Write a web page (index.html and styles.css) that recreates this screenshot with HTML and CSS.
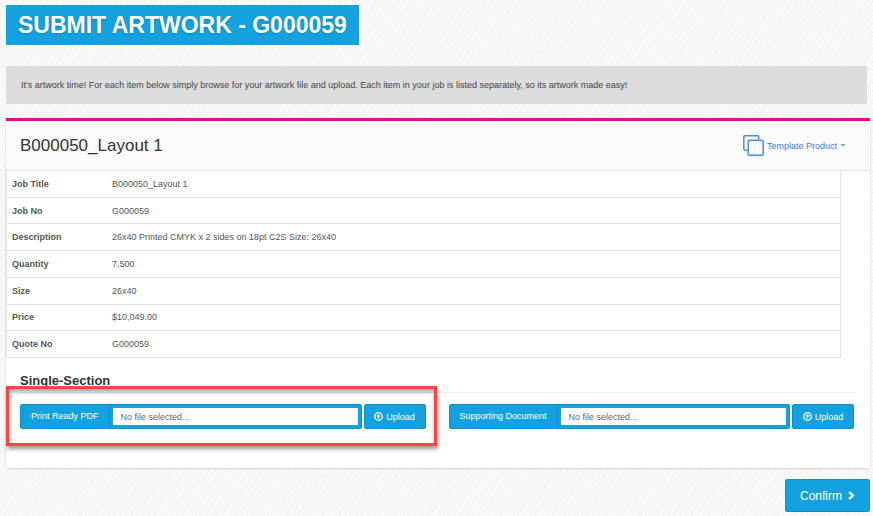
FILE: index.html
```html
<!DOCTYPE html>
<html lang="en">
<head>
  <meta charset="UTF-8" />
  <meta name="viewport" content="width=device-width, initial-scale=1.0"/>
  <title>Submit Artwork</title>
  <link rel="stylesheet" href="styles.css">
</head>
<body>
  <h1 class="page-title">SUBMIT ARTWORK - G000059</h1>
  <p class="intro">It's artwork time! For each item below simply browse for your artwork file and upload. Each item in your job is listed separately, so its artwork made easy!</p>

  <form class="artwork-form">
    <div class="card">
      <div class="card-header">
        <h2>B000050_Layout 1</h2>
        <button type="button" class="template-btn">
          <svg width="21" height="21" viewBox="0 0 21 21" fill="none" stroke="#4a8be0" stroke-width="1.5">
            <path d="M4.5 15.2H2A1.2 1.2 0 0 1 .8 14V2A1.2 1.2 0 0 1 2 .8h12.5A1.2 1.2 0 0 1 15.7 2v2.3"/>
            <rect x="5.2" y="5.2" width="15" height="15" rx="1.2"/>
          </svg>
          Template Product
          <span class="caret"></span>
        </button>
      </div>

      <table class="job-table">
        <tbody>
          <tr><th scope="row">Job Title</th><td>B000050_Layout 1</td></tr>
          <tr><th scope="row">Job No</th><td>G000059</td></tr>
          <tr><th scope="row">Description</th><td>26x40 Printed CMYK x 2 sides on 18pt C2S Size: 26x40</td></tr>
          <tr><th scope="row">Quantity</th><td>7,500</td></tr>
          <tr><th scope="row">Size</th><td>26x40</td></tr>
          <tr><th scope="row">Price</th><td>$10,049.00</td></tr>
          <tr><th scope="row">Quote No</th><td>G000059</td></tr>
        </tbody>
      </table>

      <div class="section">
        <h3>Single-Section</h3>
        <div class="uploads">
          <div class="upload highlighted">
            <div class="file-group">
              <label for="printPdf">Print Ready PDF</label>
              <input type="text" id="printPdf" value="No file selected..." readonly />
            </div>
            <button type="button" class="upload-btn">
              <svg width="9" height="9" viewBox="0 0 10 10" fill="none" stroke="#fff" stroke-width="1.4">
                <circle cx="5" cy="5" r="4.2"/>
                <path d="M5 7.6V3.4M3.3 4.9L5 3.2l1.7 1.7"/>
              </svg>
              Upload
            </button>
          </div>
          <div class="upload">
            <div class="file-group">
              <label for="supportDoc">Supporting Document</label>
              <input type="text" id="supportDoc" value="No file selected..." readonly />
            </div>
            <button type="button" class="upload-btn">
              <svg width="9" height="9" viewBox="0 0 10 10" fill="none" stroke="#fff" stroke-width="1.4">
                <circle cx="5" cy="5" r="4.2"/>
                <path d="M5 7.6V3.4M3.3 4.9L5 3.2l1.7 1.7"/>
              </svg>
              Upload
            </button>
          </div>
        </div>
      </div>
    </div>

    <div class="actions">
      <button type="submit" class="confirm-btn">
        Confirm
        <svg width="7" height="9" viewBox="0 0 7 9" fill="none" stroke="#fff" stroke-width="2.4">
          <path d="M1.2 1l3.6 3.5L1.2 8"/>
        </svg>
      </button>
    </div>
  </form>
</body>
</html>
```

FILE: styles.css
```css
* {
  box-sizing: border-box;
}
body {
  margin: 0;
  padding: 5px 3px 4px 6px;
  font-family: "Liberation Sans", Arial, sans-serif;
  font-size: 9px;
  color: #444;
  background-color: #fafafa;
  background-image:
    repeating-linear-gradient(135deg, rgba(0,0,0,0.015) 0 1px, transparent 1px 3px),
    repeating-linear-gradient(120deg, rgba(0,0,0,0.01) 0 2px, transparent 2px 5px);
}
button, input {
  font-family: inherit;
  font-size: 9px;
}
.page-title {
  width: fit-content;
  margin: 0 0 21px;
  padding: 0 12px;
  font-size: 23px;
  line-height: 40px;
  color: #fff;
  background: #14a2de;
  text-shadow: 0 1px 2px rgba(0,0,0,0.2);
}
.intro {
  margin: 0 3px 14px 0;
  padding: 12px 15px;
  line-height: 14px;
  background: #ddd;
}
.card {
  background: #fff;
  border-top: 3px solid #ec008c;
  box-shadow: 0 1px 2px rgba(0,0,0,0.15);
}
.card-header {
  display: flex;
  justify-content: space-between;
  align-items: center;
  height: 50px;
  padding: 0 24px 0 14px;
  border-bottom: 1px solid #e3e3e3;
  background: #fafafa;
}
.card-header h2 {
  margin: 0;
  font-size: 17px;
  font-weight: normal;
  color: #333;
}
.template-btn {
  display: flex;
  align-items: center;
  gap: 3px;
  padding: 0;
  border: none;
  background: none;
  color: #3f7bd6;
  cursor: pointer;
}
.caret {
  border: 3px solid transparent;
  border-top-color: #aaa;
  border-bottom: none;
}
.job-table {
  width: calc(100% - 29px);
  height: 187px;
  border-spacing: 0;
  border: 1px solid #e3e3e3;
  border-top: none;
  border-bottom: none;
}
.job-table th, .job-table td {
  padding: 0 5px;
  border-bottom: 1px solid #e3e3e3;
  text-align: left;
  color: #555;
}
.job-table th {
  width: 100px;
}
.section {
  padding: 15px 16px 39px 14px;
}
.section h3 {
  margin: 0 -2px 11px 0;
  padding-bottom: 4px;
  border-bottom: 1px solid #eee;
  font-size: 13px;
  line-height: 15px;
  color: #333;
}
.uploads {
  display: grid;
  grid-template-columns: 1fr 1fr;
  gap: 23px;
}
.upload {
  position: relative;
  display: flex;
  gap: 2px;
}
.highlighted::after {
  content: "";
  position: absolute;
  inset: -18px -11px -17px -14px;
  border: 3px solid #fb4444;
  box-shadow: 1px 3px 4px rgba(0,0,0,0.4), inset 1px 3px 4px rgba(0,0,0,0.35);
  pointer-events: none;
}
.file-group {
  flex: 1;
  display: flex;
  min-width: 0;
  height: 25px;
  border: 1px solid #1191c9;
  border-radius: 2px;
  background: #14a2de;
}
.file-group label {
  padding: 0 10px;
  border-right: 1px solid #1191c9;
  line-height: 23px;
  color: #fff;
  white-space: nowrap;
}
.file-group input {
  flex: 1;
  min-width: 0;
  margin: 3px;
  padding: 0 8px;
  border: none;
  border-radius: 1px;
  color: #666;
  background: #fff;
}
.upload-btn, .confirm-btn {
  display: flex;
  align-items: center;
  justify-content: center;
  border: 1px solid #1191c9;
  border-radius: 2px;
  background: #14a2de;
  color: #fff;
  cursor: pointer;
}
.upload-btn {
  width: 62px;
  gap: 3px;
  padding: 0;
}
.actions {
  display: flex;
  justify-content: flex-end;
  margin-top: 11px;
}
.confirm-btn {
  gap: 6px;
  height: 33px;
  padding: 0 14px;
  font-size: 12px;
}
```
